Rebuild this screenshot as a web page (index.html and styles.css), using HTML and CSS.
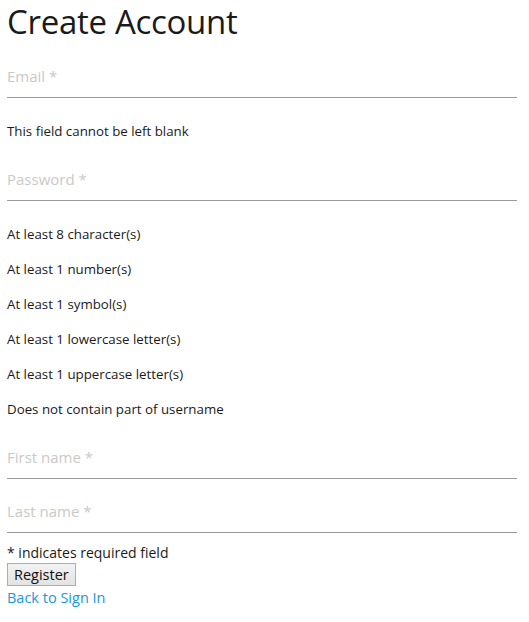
FILE: index.html
```html
<!DOCTYPE html>
<html lang="en">
<head>
<meta charset="utf-8">
<title>Create Account</title>
<link rel="stylesheet" href="styles.css">
</head>
<body>
<main class="page">
  <h1 class="title">Create Account</h1>
  <form class="form">
    <input class="field field-email" type="email" placeholder="Email *">
    <p class="msg msg-error">This field cannot be left blank</p>
    <input class="field field-password" type="password" placeholder="Password *">
    <ul class="rules">
      <li>At least 8 character(s)</li>
      <li>At least 1 number(s)</li>
      <li>At least 1 symbol(s)</li>
      <li>At least 1 lowercase letter(s)</li>
      <li>At least 1 uppercase letter(s)</li>
      <li>Does not contain part of username</li>
    </ul>
    <input class="field field-first" type="text" placeholder="First name *">
    <input class="field field-last" type="text" placeholder="Last name *">
    <p class="note">* indicates required field</p>
    <button class="btn" type="button">Register</button>
    <a class="link" href="#">Back to Sign In</a>
  </form>
</main>
</body>
</html>
```

FILE: styles.css
```css
* { box-sizing: border-box; }
html, body { margin: 0; padding: 0; background: #fff; }
body {
  font-family: "Open Sans", "Noto Sans", "Liberation Sans", sans-serif;
  color: #1a1a1a;
}
.page {
  width: 510px;
  margin-left: 7px;
}
.title {
  margin: 0;
  font-size: 33px;
  font-weight: 400;
  line-height: 44px;
  letter-spacing: -0.3px;
  color: #1a1a1a;
}
.form {
  display: flex;
  flex-direction: column;
  align-items: flex-start;
}
.field {
  display: block;
  width: 100%;
  height: 43px;
  margin: 0;
  padding: 0;
  border: 0;
  border-bottom: 1px solid #9a9a9a;
  outline: none;
  background: transparent;
  font-family: inherit;
  font-size: 15px;
  color: #1a1a1a;
}
.field::placeholder { color: #c9c9c9; }
.field-email { margin-top: 11px; }
.field-password { margin-top: 17px; }
.field-first { margin-top: 17px; }
.field-last { margin-top: 11px; }
.msg {
  margin: 23px 0 0;
  font-size: 13.3px;
  line-height: 20px;
}
.rules {
  list-style: none;
  margin: 23px 0 0;
  padding: 0;
  display: flex;
  flex-direction: column;
  gap: 15px;
  font-size: 13.3px;
  line-height: 20px;
}
.note {
  margin: 10px 0 0;
  font-size: 14px;
  line-height: 20px;
}
.btn {
  margin-top: 0;
  height: 23px;
  padding: 0 6px;
  border: 1px solid #adadad;
  border-radius: 0;
  background: linear-gradient(#f2f2f2, #e3e3e3);
  font-family: inherit;
  font-size: 14.5px;
  line-height: 20px;
  color: #111;
}
.link {
  margin-top: 1px;
  font-size: 14.5px;
  line-height: 22px;
  color: #1a97e0;
  text-decoration: none;
}
```
